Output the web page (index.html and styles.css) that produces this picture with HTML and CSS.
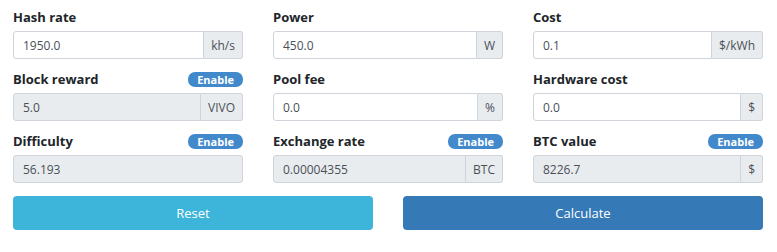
FILE: index.html
```html
<!DOCTYPE html>
<html lang="en">
<head>
	<title>Mining Calculator</title>
	<link rel="stylesheet" href="styles.css">
</head>
<body>
	<div id="calc">
		<div class="grid">
			<div class="field">
				<div class="field-head"><label>Hash rate</label></div>
				<div class="input-group">
					<input type="text" value="1950.0">
					<span class="addon">kh/s</span>
				</div>
			</div>
			<div class="field">
				<div class="field-head"><label>Power</label></div>
				<div class="input-group">
					<input type="text" value="450.0">
					<span class="addon">W</span>
				</div>
			</div>
			<div class="field">
				<div class="field-head"><label>Cost</label></div>
				<div class="input-group">
					<input type="text" value="0.1">
					<span class="addon">$/kWh</span>
				</div>
			</div>

			<div class="field">
				<div class="field-head"><label>Block reward</label><span class="badge">Enable</span></div>
				<div class="input-group">
					<input type="text" value="5.0" disabled>
					<span class="addon">VIVO</span>
				</div>
			</div>
			<div class="field">
				<div class="field-head"><label>Pool fee</label></div>
				<div class="input-group">
					<input type="text" value="0.0">
					<span class="addon">%</span>
				</div>
			</div>
			<div class="field">
				<div class="field-head"><label>Hardware cost</label></div>
				<div class="input-group">
					<input type="text" value="0.0">
					<span class="addon">$</span>
				</div>
			</div>

			<div class="field">
				<div class="field-head"><label>Difficulty</label><span class="badge">Enable</span></div>
				<div class="input-group">
					<input type="text" value="56.193" disabled>
				</div>
			</div>
			<div class="field">
				<div class="field-head"><label>Exchange rate</label><span class="badge">Enable</span></div>
				<div class="input-group">
					<input type="text" value="0.00004355" disabled>
					<span class="addon">BTC</span>
				</div>
			</div>
			<div class="field">
				<div class="field-head"><label>BTC value</label><span class="badge">Enable</span></div>
				<div class="input-group">
					<input type="text" value="8226.7" disabled>
					<span class="addon">$</span>
				</div>
			</div>
		</div>

		<div class="actions">
			<button class="btn btn-reset">Reset</button>
			<button class="btn btn-calc">Calculate</button>
		</div>
	</div>
</body>
</html>
```

FILE: styles.css
```css
body {
	margin: 0;
	background-color: #fff;
	color: #212529;
	font-family: "Open Sans", "Noto Sans", sans-serif;
}

#calc {
	padding: 7px 14px 0 13px;
}

.grid {
	display: grid;
	grid-template-columns: repeat(3, 230px);
	column-gap: 30px;
	row-gap: 10px;
}

.field-head {
	display: flex;
	justify-content: space-between;
	align-items: center;
	height: 20px;
	margin-bottom: 4px;
}

.field-head label {
	font-size: 13px;
	font-weight: bold;
}

.badge {
	background-color: #4189cb;
	color: #fff;
	font-size: 11px;
	font-weight: bold;
	line-height: 15px;
	padding: 0 9px;
	border-radius: 7px;
}

.input-group {
	display: flex;
	height: 28px;
}

.input-group input {
	flex: 1;
	min-width: 0;
	box-sizing: border-box;
	height: 28px;
	margin: 0;
	padding: 0 9px;
	border: 1px solid #ced4da;
	border-radius: 3px;
	font-family: inherit;
	font-size: 12px;
	color: #495057;
	background-color: #fff;
}

.input-group input:disabled {
	background-color: #e9ecef;
}

.input-group input:not(:last-child) {
	border-top-right-radius: 0;
	border-bottom-right-radius: 0;
}

.addon {
	display: flex;
	align-items: center;
	padding: 0 7px;
	border: 1px solid #ced4da;
	border-left: none;
	border-radius: 0 3px 3px 0;
	background-color: #e9ecef;
	color: #495057;
	font-size: 12px;
}

.actions {
	display: flex;
	gap: 30px;
	margin-top: 13px;
}

.btn {
	width: 360px;
	height: 34px;
	border: none;
	border-radius: 4px;
	color: #fff;
	font-family: inherit;
	font-size: 13px;
}

.btn-reset {
	background-color: #3db4d9;
}

.btn-calc {
	background-color: #3579b6;
}
```
